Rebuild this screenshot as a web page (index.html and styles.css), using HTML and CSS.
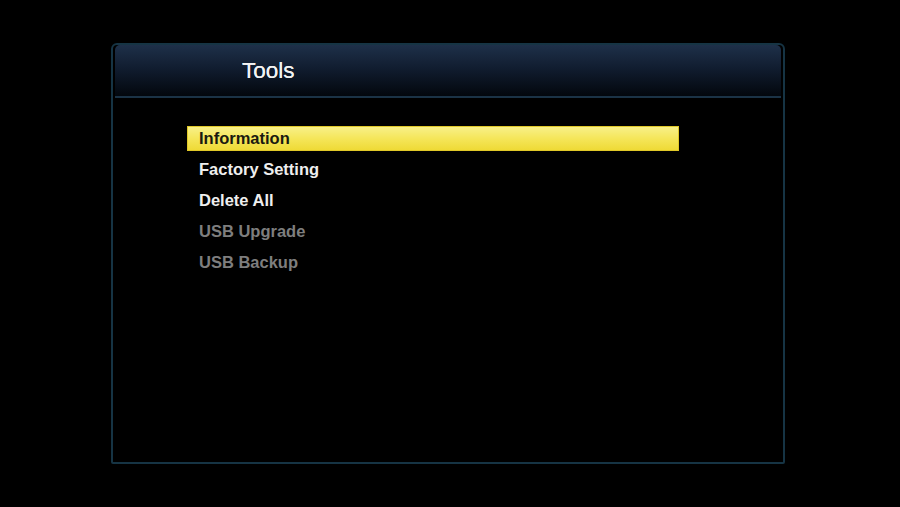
FILE: index.html
```html
<!DOCTYPE html>
<html>
<head>
<meta charset="utf-8">
<link rel="stylesheet" href="styles.css">
</head>
<body>
<div class="screen">
  <div class="panel">
    <div class="header"><span class="title">Tools</span></div>
    <ul class="menu">
      <li class="item active">Information</li>
      <li class="item">Factory Setting</li>
      <li class="item">Delete All</li>
      <li class="item disabled">USB Upgrade</li>
      <li class="item disabled">USB Backup</li>
    </ul>
  </div>
</div>
</body>
</html>
```
FILE: styles.css
```css
html, body {
  margin: 0;
  padding: 0;
  background: #000;
}
.screen {
  width: 900px;
  height: 507px;
  background: #000;
  padding: 43px 0 0 111px;
  box-sizing: border-box;
  font-family: "Liberation Sans", Arial, sans-serif;
}
.panel {
  width: 674px;
  height: 421px;
  box-sizing: border-box;
  border: 2px solid #163444;
  border-radius: 6px 6px 2px 2px;
  background: #000;
}
.header {
  height: 51px;
  margin: 0 2px;
  border-radius: 5px 5px 0 0;
  background: linear-gradient(to bottom, #1e3049 0%, #111d30 45%, #03070d 100%);
  border-bottom: 2px solid #1b3346;
  display: flex;
  align-items: center;
  padding-left: 127px;
}
.title {
  color: #f2f2f2;
  font-size: 22.5px;
  text-shadow: 0 0 0.5px currentColor;
}
.menu {
  list-style: none;
  margin: 28px 0 0 74px;
  padding: 0;
  width: 492px;
}
.item {
  height: 25px;
  line-height: 25px;
  margin-bottom: 6px;
  padding-left: 12px;
  font-size: 16.5px;
  font-weight: bold;
  color: #eeeeee;
}
.item.active {
  background: linear-gradient(to bottom, #f8f18c 0%, #f5e65a 50%, #eed933 100%);
  color: #1a1a10;
  box-shadow: inset 0 0 0 1px #e0c828;
}
.item.disabled {
  color: #7e7e7e;
}
```
